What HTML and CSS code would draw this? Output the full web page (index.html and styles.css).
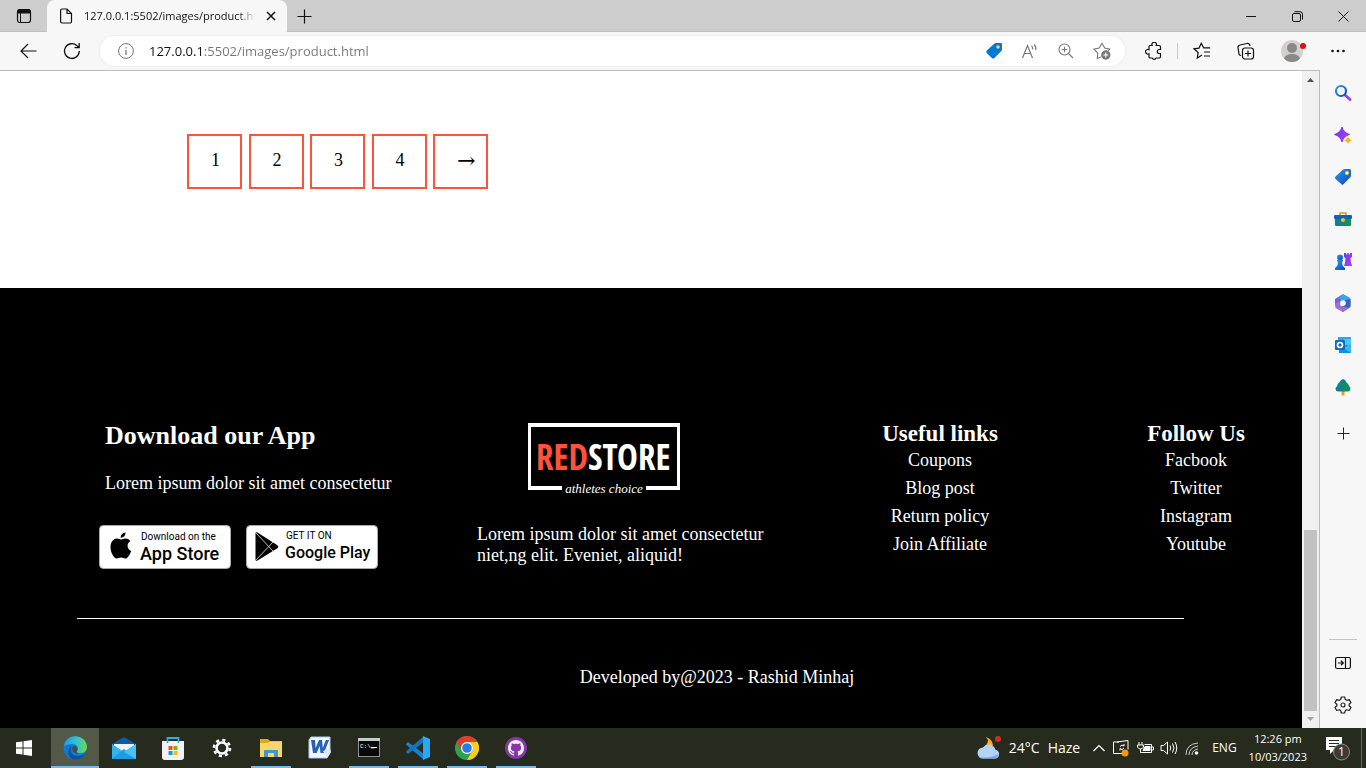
FILE: index.html
```html
<!DOCTYPE html>
<html lang="en">
<head>
<meta charset="utf-8">
<title>Product page</title>
<link rel="stylesheet" href="styles.css">
</head>
<body class="screen">

<header class="titlebar">
  <button class="tab-actions" aria-label="Tab actions"><svg width="16" height="16" viewBox="0 0 16 16" fill="none" stroke="#111"><rect x="1.500" y="1.500" width="13" height="13" rx="2.500" stroke-width="1.200"/><path d="M1.500 5V4a2.500 2.500 0 0 1 2.500-2.500h8A2.500 2.500 0 0 1 14.500 4v1z" fill="#111"/><path d="M4.500 5v9"/></svg></button>
  <div class="tab">
    <svg width="14" height="16" viewBox="0 0 14 16" fill="none" stroke="#111" stroke-width="1.200"><path d="M1.600 2.500a1.500 1.500 0 0 1 1.500-1.500H8l4.500 4.500v8a1.500 1.500 0 0 1-1.500 1.500H3.100a1.500 1.500 0 0 1-1.500-1.500zM8 1v4.500h4.500"/></svg>
    <span class="tab-title">127.0.0.1:5502/images/product.html</span>
    <button class="tab-close" aria-label="Close tab"><svg width="10" height="10" viewBox="0 0 10 10" stroke="#111" stroke-width="1.500"><path d="M1 1l8 8M9 1l-8 8"/></svg></button>
  </div>
  <button class="new-tab" aria-label="New tab"><svg width="15" height="15" viewBox="0 0 15 15" stroke="#111" stroke-width="1.200"><path d="M7.500 .5v14M.5 7.500h14"/></svg></button>
  <div class="window-buttons">
    <button aria-label="Minimize"><svg width="10" height="10" viewBox="0 0 10 10" stroke="#111"><path d="M0 5.500h10"/></svg></button>
    <button aria-label="Restore"><svg width="11" height="11" viewBox="0 0 11 11" fill="none" stroke="#111"><rect x=".5" y="2.500" width="8" height="8" rx="1.500"/><path d="M2.500 .7h5.500a2.500 2.500 0 0 1 2.500 2.500v5.300"/></svg></button>
    <button aria-label="Close"><svg width="11" height="11" viewBox="0 0 11 11" stroke="#111"><path d="M.5 .5l10 10M10.500 .5l-10 10"/></svg></button>
  </div>
</header>

<nav class="toolbar" aria-label="Browser">
  <button class="tool" aria-label="Back"><svg width="17" height="16" viewBox="0 0 17 16" fill="none" stroke="#111" stroke-width="1.200"><path d="M16.500 8H1M8 1L1 8l7 7"/></svg></button>
  <button class="tool reload" aria-label="Refresh"><svg width="18" height="18" viewBox="0 0 18 18" fill="none" stroke="#111" stroke-width="1.300"><path d="M16.300 9A7.400 7.400 0 1 1 14 3.700l2 1.800M16.200 1v4.600h-4.700"/></svg></button>
  <div class="address">
    <svg width="16" height="16" viewBox="0 0 16 16" fill="none" stroke="#777"><circle cx="8" cy="8" r="7.400"/><path d="M8 7v5M8 4.200v1.400" stroke-width="1.300"/></svg>
    <input class="url" type="text" aria-label="Address" value="127.0.0.1:5502/images/product.html">
    <button class="tool" aria-label="Shopping"><svg width="18" height="18" viewBox="0 0 18 18"><path d="M9.500 1.500Q10 1 11 1h5q1 0 1 1v5.500q0 .8-.6 1.400l-7 7q-1.300 1.300-2.600 0l-5-5q-1.200-1.200 0-2.400z" fill="#0078d7"/><circle cx="13" cy="5" r="1.800" fill="#ffd43b"/></svg></button>
    <button class="tool" aria-label="Read aloud"><svg width="18" height="16" viewBox="0 0 18 16" fill="none" stroke="#777" stroke-width="1.200"><path d="M1.500 15L6.500 2.500l5 12.500M3.300 10.500h6.500M10.500 3q1.500 1.300 1.200 3.500M13 1.500q2.500 2 1.700 5.500"/></svg></button>
    <button class="tool" aria-label="Zoom"><svg width="16" height="16" viewBox="0 0 16 16" fill="none" stroke="#777" stroke-width="1.100"><circle cx="6.500" cy="6.500" r="5.500"/><path d="M10.500 10.500l4.500 4.500M6.500 3.700v5.600M3.700 6.500h5.600"/></svg></button>
    <button class="tool" aria-label="Add to favorites"><svg width="18" height="18" viewBox="0 0 18 18" fill="none" stroke="#777" stroke-width="1.100"><path d="M8 15l-3.700 1.500.5-5.300L1 7.200l5.200-1.100L9 1.300l2.700 4.800 5 1.100-1.500 1.600"/><circle cx="12.800" cy="13" r="4.700" fill="#777" stroke="none"/><path d="M12.800 10.500v5M10.300 13h5" stroke="#fff"/></svg></button>
  </div>
  <button class="tool extensions" aria-label="Extensions"><svg width="18" height="18" viewBox="0 0 18 18" fill="none" stroke="#111" stroke-width="1.200"><path d="M4 4.500a1 1 0 0 1 1-1h2.200a2.300 2.300 0 1 1 4 0H14a1.500 1.500 0 0 1 1.500 1.500v2.500h-1.200a2 2 0 1 0 0 4h1.200v3a1.500 1.500 0 0 1-1.500 1.500h-2.800a2.200 2.200 0 0 1-4 0H5a1 1 0 0 1-1-1v-3.300a2.300 2.300 0 1 1 0-4z"/></svg></button>
  <span class="divider"></span>
  <button class="tool" aria-label="Favorites"><svg width="18" height="18" viewBox="0 0 18 18" fill="none" stroke="#111" stroke-width="1.200"><path d="M9 13l-4.700 3 .8-5.500L1 6.800l5-.7L8.300 1.300l2.400 4.500h6.500M11 10h6M11 14h6"/></svg></button>
  <button class="tool collections" aria-label="Collections"><svg width="18" height="18" viewBox="0 0 18 18" fill="none" stroke="#111" stroke-width="1.200"><path d="M4 13.500A2.500 2.500 0 0 1 1.800 10.600L1 5.500A2.300 2.300 0 0 1 3 3l7-1.500A2.500 2.500 0 0 1 13 4"/><rect x="5.500" y="6" width="11" height="11" rx="2.500"/><path d="M11 8.500v6M8 11.500h6"/></svg></button>
  <button class="tool profile" aria-label="Profile"><svg width="28" height="24" viewBox="0 0 28 24"><defs><clipPath id="face"><circle cx="12" cy="12" r="11"/></clipPath></defs><circle cx="12" cy="12" r="11" fill="#d2d0ce"/><g clip-path="url(#face)" fill="#8a8886"><circle cx="12" cy="9" r="5"/><ellipse cx="12" cy="20" rx="8" ry="5"/></g><circle cx="23" cy="7" r="3" fill="#e00b0b"/></svg></button>
  <button class="tool menu" aria-label="Settings and more"><svg width="14" height="4" viewBox="0 0 14 4" fill="#111"><circle cx="1.500" cy="2" r="1.300"/><circle cx="7" cy="2" r="1.300"/><circle cx="12.500" cy="2" r="1.300"/></svg></button>
</nav>

<div class="workspace">
  <main class="page">
    <nav class="pagination" aria-label="Pages">
      <a href="#">1</a>
      <a href="#">2</a>
      <a href="#">3</a>
      <a href="#">4</a>
      <a href="#" class="next">&#8594;</a>
    </nav>
    <footer class="footer">
      <div class="columns">
        <section class="download">
          <h2>Download our App</h2>
          <p>Lorem ipsum dolor sit amet consectetur</p>
          <div class="badges">
            <a href="#" aria-label="App Store"><svg width="132" height="44" viewBox="0 0 132 44"><rect x=".5" y=".5" width="131" height="43" rx="4" fill="#fff" stroke="#aaa"/><path d="M26.500 7.500c.3 2.800-2 5.300-4.800 5.200-.2-2.600 2-5 4.800-5.200zM22 14.500c1.200 0 2.400-1.200 4.600-1.100 2 .1 3.800 1 4.800 2.500-4.200 2.600-3.500 8.300.8 10-1.200 3.400-3.400 7.600-6 7.600-1.500 0-2.200-1-4.200-1s-2.800 1-4.200 1c-3 0-6.300-6.200-6.300-11.200 0-5.500 3.300-8.800 6.500-8.800 1.600 0 3 1 4 1z"/><text x="42" y="15" class="badge-small">Download on the</text><text x="41" y="35" class="badge-large">App Store</text></svg></a>
            <a href="#" aria-label="Google Play"><svg width="132" height="44" viewBox="0 0 132 44"><rect x=".5" y=".5" width="131" height="43" rx="4" fill="#fff" stroke="#aaa"/><path d="M9.500 8.500q0-2 2-1L31 20q2.500 1.800 0 3.500L11.500 35.500q-2 1-2-1z"/><path d="M10 8l17 18M10 35l17-18" stroke="#bbb"/><text x="40" y="14" class="badge-small">GET IT ON</text><text x="39" y="33" class="badge-large play">Google Play</text></svg></a>
          </div>
        </section>
        <section class="about">
          <svg class="logo" width="152" height="76" viewBox="0 0 152 76" role="img" aria-label="Redstore athletes choice"><path d="M34 66H1.500V3h149v63H118" fill="none" stroke="#fff" stroke-width="3"/><path d="M0 1h152v4H0zM0 64h34v4H0zM118 64h34v4h-34z" fill="#fff"/><text x="8" y="48" class="logo-name"><tspan class="logo-red">RED</tspan>STORE</text><text x="76" y="71" class="logo-tagline" text-anchor="middle">athletes choice</text></svg>
          <p>Lorem ipsum dolor sit amet consectetur<br>niet,ng elit. Eveniet, aliquid!</p>
        </section>
        <section class="links">
          <h3>Useful links</h3>
          <ul>
            <li><a href="#">Coupons</a></li>
            <li><a href="#">Blog post</a></li>
            <li><a href="#">Return policy</a></li>
            <li><a href="#">Join Affiliate</a></li>
          </ul>
        </section>
        <section class="links">
          <h3>Follow Us</h3>
          <ul>
            <li><a href="#">Facbook</a></li>
            <li><a href="#">Twitter</a></li>
            <li><a href="#">Instagram</a></li>
            <li><a href="#">Youtube</a></li>
          </ul>
        </section>
      </div>
      <hr class="rule">
      <p class="credit">Developed by@2023 - Rashid Minhaj</p>
    </footer>
  </main>

  <div class="scrollbar" aria-hidden="true">
    <svg width="17" height="17" viewBox="0 0 17 17"><path d="M5 11l3.500-4 3.500 4z" fill="#505050"/></svg>
    <div class="track"><div class="thumb"></div></div>
    <svg width="17" height="17" viewBox="0 0 17 17"><path d="M5 6l3.500 4L12 6z" fill="#a3a3a3"/></svg>
  </div>

  <aside class="sidebar">
    <svg width="0" height="0" class="defs"><defs>
      <linearGradient id="blue" x2="1" y2="1"><stop stop-color="#2f9be8"/><stop offset="1" stop-color="#0a47c2"/></linearGradient>
      <linearGradient id="violet" x2="1" y2="1"><stop stop-color="#6a35e8"/><stop offset="1" stop-color="#b043f5"/></linearGradient>
      <linearGradient id="teal" x2="1"><stop stop-color="#1479a3"/><stop offset="1" stop-color="#10964a"/></linearGradient>
    </defs></svg>
    <button aria-label="Search"><svg width="18" height="18" viewBox="0 0 18 18" fill="none"><path d="M11 11l5 4.500" stroke="#9140e8" stroke-width="2.800" stroke-linecap="round"/><circle cx="7" cy="7" r="5" stroke="url(#blue)" stroke-width="2.200"/></svg></button>
    <button aria-label="Discover"><svg width="18" height="18" viewBox="0 0 18 18"><path d="M8 1q1.500 5.500 7.500 7.500Q9.500 10 8 16 6.500 10 .5 8.500 6.500 6.500 8 1z" fill="url(#violet)" stroke="#8038ed" stroke-linejoin="round"/><path d="M14 10.500q.8 3 4 3.800-3.200.7-4 3.700-.8-3-4-3.700 3.200-.8 4-3.800z" fill="#f7b50c"/></svg></button>
    <button aria-label="Shopping"><svg width="18" height="18" viewBox="0 0 18 18"><path d="M8.500 2Q9.500 1 11 1h4.500Q17 1 17 2.500v5q0 1-.8 1.800l-6.700 7q-1 1-2 0L1.500 11q-1.300-1.200 0-2.500z" fill="url(#blue)"/><circle cx="13" cy="5" r="1.700" fill="#fff" stroke="#f5bd19"/></svg></button>
    <button aria-label="Tools"><svg width="18" height="16" viewBox="0 0 18 16"><path d="M6 4V2h6v2" fill="none" stroke="#d69b12" stroke-width="1.500"/><rect x="1" y="6" width="16" height="9" rx="1" fill="url(#teal)"/><rect x="0" y="4" width="18" height="4" rx="1" fill="#1261b8"/><circle cx="9" cy="9" r="2" fill="#f6c12a"/></svg></button>
    <button aria-label="Games"><svg width="18" height="18" viewBox="0 0 18 18"><path d="M10 1h2v1.500h1.200V1h1.600v1.500H16V1h2v4l-1.500 1 .5 5 1 2v1h-8l1-3 .5-5L10 5z" fill="url(#violet)"/><circle cx="6" cy="5.500" r="3" fill="url(#blue)"/><path d="M3 8h6v1.500H8l.5 4L11 16v2H1v-2l2.500-2.500.5-4H3z" fill="url(#blue)"/></svg></button>
    <button aria-label="Microsoft 365"><svg width="18" height="18" viewBox="0 0 18 18"><path d="M9 0l7 4v5l-5-3-4 2-1 6-5-3V5z" fill="#7168d3"/><path d="M7 1h3l6.500 3.500V12L9 7.500 5 5z" fill="#38a7e7"/><path d="M16.500 5v8L9 18l-6-4 8-3V6z" fill="#3f5ec3"/><path d="M1 10l5-3v5l5 1 4 1-6 4-7.500-4z" fill="#a46bd7"/><circle cx="9" cy="9" r="2.800" fill="#f7f7f7"/></svg></button>
    <button aria-label="Outlook"><svg width="18" height="18" viewBox="0 0 18 18"><path d="M4 1h13v8H4z" fill="#28a8ea"/><path d="M5 8h12v9H5z" fill="#1490df"/><path d="M10 3h7v6h-7z" fill="#50c4f5"/><path d="M17 8v9l-8-5z" fill="#35b8f1"/><rect x="1" y="4" width="10" height="10" rx="1" fill="#0f6cbd"/><circle cx="6" cy="9" r="2.500" fill="none" stroke="#fff" stroke-width="1.600"/></svg></button>
    <button aria-label="Drop"><svg width="18" height="18" viewBox="0 0 18 18"><path d="M7.500 12h3v5.500h-3z" fill="#f0a01e"/><path d="M9 1q2.500.3 3.500 3.500Q15 6 15 8q2 1.500 1.300 3.700Q15.500 14 13 13.500H4Q1.500 13 1.500 11 1.500 9 3.300 8 3 5.500 5.300 4.500 6.500 1.500 9 1z" fill="url(#teal)"/></svg></button>
    <button class="add" aria-label="Customize"><svg width="13" height="13" viewBox="0 0 13 13" stroke="#222"><path d="M6.500 .5v12M.5 6.500h12"/></svg></button>
    <div class="sidebar-bottom">
      <button aria-label="Hide sidebar"><svg width="16" height="14" viewBox="0 0 16 14" fill="none" stroke="#111" stroke-width="1.200"><rect x=".6" y="1.500" width="14.800" height="11" rx="1.500"/><path d="M10.500 1.500v11M3 7h5M6 4.800L8.300 7 6 9.200"/></svg></button>
      <button aria-label="Settings"><svg width="18" height="18" viewBox="0 0 18 18" fill="none" stroke="#222" stroke-width="1.200" stroke-linejoin="round"><path d="M7.300 1h3.400l.6 2.500 1.500.8 2.500-.7 1.700 3-1.900 1.700v1.500L17 11.500l-1.700 3-2.500-.8-1.500.9-.6 2.400H7.300l-.6-2.400-1.500-.9-2.500.8-1.700-3 1.900-1.700V8.300L1 6.600l1.700-3 2.500.7 1.500-.8z"/><circle cx="9" cy="9" r="2"/></svg></button>
    </div>
  </aside>
</div>

<div class="taskbar">
  <button class="start" aria-label="Start"><svg width="16" height="16" viewBox="0 0 16 16" fill="#fff"><path d="M0 2.300l6.500-.9v6.100H0zM7.500 1.200L16 0v7.500H7.500zM0 8.500h6.500v6.100L0 13.700zM7.500 8.500H16V16l-8.500-1.200z"/></svg></button>
  <button class="app running active" aria-label="Edge"><svg width="24" height="24" viewBox="0 0 24 24"><defs><linearGradient id="edgeTop"><stop stop-color="#1b9de2"/><stop offset=".55" stop-color="#35c1cf"/><stop offset="1" stop-color="#67dc4b"/></linearGradient></defs><circle cx="12" cy="12" r="11.500" fill="#1478ce"/><path d="M.7 10.500C2 4 6.500.3 12.200.3 18.500.3 24 5 24 11c0 4-3.500 6.300-7 6.300-3.200 0-4-1.300-3.100-2.300 2-2.500.8-7-4.500-7-3.500 0-7 1-8.700 2.500z" fill="url(#edgeTop)"/><path d="M9 9.500C6 13 7.500 20.500 15 20c3 0 5-1 7-2.200-3 5-8 6.500-12 5.500C4 21 4 12.500 9 9.500z" fill="#0c4fa4"/><path d="M10 10.500c3-1.500 5.800 2 3.800 4.500-.8 1 .2 2.300 3 2.300-4 1.400-9.800-2-6.800-6.800z" fill="#474d41"/></svg></button>
  <button class="app" aria-label="Mail"><svg width="24" height="24" viewBox="0 0 24 24"><path d="M0 8L12 1l12 7v8H0z" fill="#0a5cab"/><path d="M2 8h20v8H2z" fill="#eef3f8"/><path d="M0 8l12 8 12-8v15H0z" fill="#33b2ed"/><path d="M0 23l12-10 12 10z" fill="#229ae0"/><path d="M12 16l12-8v15z" fill="#45c2f6"/></svg></button>
  <button class="app" aria-label="Store"><svg width="24" height="24" viewBox="0 0 24 24"><path d="M1 5h22v16q0 3-3 3H4q-3 0-3-3z" fill="#f2f2f2"/><path d="M6.500 7V2h11v5" fill="none" stroke="#2faee0" stroke-width="1.800"/><path d="M7.500 10h4v4h-4z" fill="#f05022"/><path d="M12.500 10h4v4h-4z" fill="#7fb900"/><path d="M7.500 15h4v4h-4z" fill="#00a3ee"/><path d="M12.500 15h4v4h-4z" fill="#feb800"/></svg></button>
  <button class="app" aria-label="Settings"><svg width="20" height="20" viewBox="0 0 20 20" fill="none" stroke="#fff"><circle cx="10" cy="10" r="5.500" stroke-width="2.600"/><circle cx="10" cy="10" r="8" stroke-width="2.600" stroke-dasharray="3.140 3.140"/></svg></button>
  <button class="app running" aria-label="File Explorer"><svg width="22" height="20" viewBox="0 0 22 20"><path d="M0 1h8l2 2h12v5H0z" fill="#e8a419"/><path d="M0 5h8l2-1.500h12V19H0z" fill="#ffd566"/><path d="M4 19v-6q0-1 1-1h12q1 0 1 1v6h-4v-4H8v4z" fill="#3b97dc"/></svg></button>
  <button class="app" aria-label="Word"><svg width="24" height="24" viewBox="0 0 24 24"><path d="M3 1h19v16l-3 5H1V4z" fill="#f4f8fd" stroke="#a8c8ec"/><path d="M3 4h4l.6 8L11 4h3l.8 8 3-8H21l-5 13h-3.500l-.8-7-3 7H5z" fill="#2761ba"/><path d="M15 15l7-3 1 4-4 6z" fill="#dce7f4"/></svg></button>
  <button class="app running" aria-label="Command Prompt"><svg width="22" height="20" viewBox="0 0 22 20"><rect x=".5" y=".5" width="21" height="18" fill="#090909" stroke="#8d929a"/><path d="M0 0h22v3H0z" fill="#c4cbd5"/><text x="2" y="10" class="prompt">C:\_</text><path d="M13 9.500h6" stroke="#fff"/></svg></button>
  <button class="app running" aria-label="Visual Studio Code"><svg width="24" height="24" viewBox="0 0 24 24"><path d="M0 8l2-2 16 12v6L.5 9z" fill="#1584cf"/><path d="M0 16l2 2L18 6V0L.5 15z" fill="#1575bb"/><path d="M17 0l7 3v18l-7 3z" fill="#2ca7f3"/></svg></button>
  <button class="app running" aria-label="Chrome"><svg width="24" height="24" viewBox="0 0 24 24"><circle cx="12" cy="12" r="12" fill="#2ba24c"/><path d="M1.600 6A12 12 0 0 1 22.400 6H12a6 6 0 0 0-5.200 9z" fill="#e33b2e"/><path d="M22.400 6A12 12 0 0 1 12 24l5.200-9A6 6 0 0 0 12 6z" fill="#fccb1c"/><circle cx="12" cy="12" r="6" fill="#fff"/><circle cx="12" cy="12" r="4.800" fill="#2979e8"/></svg></button>
  <button class="app running" aria-label="GitHub Desktop"><svg width="24" height="24" viewBox="0 0 24 24"><circle cx="12" cy="12" r="11" fill="#8537a7"/><path transform="translate(4 4)" fill="#f6edf9" d="M8 0C3.580 0 0 3.580 0 8c0 3.540 2.290 6.530 5.470 7.590.4.070.55-.17.55-.38 0-.19-.01-.82-.01-1.490-2.010.37-2.530-.49-2.690-.94-.09-.23-.48-.94-.82-1.130-.28-.15-.68-.52-.01-.53.63-.01 1.080.58 1.230.82.72 1.210 1.870.87 2.330.66.070-.52.28-.87.51-1.070-1.780-.2-3.640-.89-3.640-3.950 0-.87.31-1.590.82-2.150-.08-.2-.36-1.020.08-2.120 0 0 .67-.21 2.200.82.64-.18 1.320-.27 2-.27s1.360.09 2 .27c1.530-1.040 2.200-.82 2.200-.82.44 1.100.16 1.920.08 2.120.51.56.82 1.270.82 2.150 0 3.070-1.870 3.750-3.650 3.950.29.25.54.73.54 1.480 0 1.070-.01 1.930-.01 2.200 0 .21.15.46.55.38A8.010 8.010 0 0 0 16 8c0-4.420-3.580-8-8-8z"/></svg></button>

  <div class="tray">
    <button class="weather"><svg width="26" height="26" viewBox="0 0 26 26"><path d="M11 2q5 5-3 11 8 3 10-3Q17 4 11 2z" fill="#f9a833"/><circle cx="23" cy="4" r="3" fill="#d22b20"/><path d="M8 23.500a5.500 5.500 0 0 1 0-11 7 7 0 0 1 12.500 2.300 4.500 4.500 0 0 1 .5 8.700z" fill="#b5d2f5"/><path d="M4 22q9 2 20-3-1 4-3.500 4.500H8Q5.500 23.500 4 22z" fill="#7ea9e6"/></svg><span>24°C</span><span>Haze</span></button>
    <button aria-label="Show hidden icons"><svg width="14" height="8" viewBox="0 0 14 8" fill="none" stroke="#fff" stroke-width="1.200"><path d="M1.500 7L7 1.500 12.500 7"/></svg></button>
    <button aria-label="Update"><svg width="18" height="18" viewBox="0 0 18 18" fill="none" stroke="#fff"><path d="M7 3H1.500v11.500H10M5 3l11-1.500v9M8 7.500q2-2.500 4-.5V5M12 9q-2 3-4 .5v2"/><circle cx="13" cy="14" r="3.500" fill="#ff9800" stroke="none"/></svg></button>
    <button aria-label="Battery"><svg width="18" height="16" viewBox="0 0 18 16" fill="none" stroke="#fff"><path d="M3 2v3M6 2v3M1.500 5h6v2q-1 2-3 2T1.500 7zM4.500 9v3.500h11v-8H8.500M16 7h1.500v3H16"/><path d="M9 6.500h5v4H7z" fill="#fff"/></svg></button>
    <button aria-label="Volume"><svg width="18" height="16" viewBox="0 0 18 16" fill="none" stroke="#fff"><path d="M1 5.500h2.500l4-3.500v12l-4-3.500H1zM10 5.500q1.500 2.500 0 5M12.500 3.500q3 4.500 0 9M15 2q3.500 6 0 12"/></svg></button>
    <button aria-label="Network"><svg width="16" height="16" viewBox="0 0 16 16" fill="none" stroke="#ccc"><path d="M2 15Q2 4 14 3M5 15Q5 7.500 14 6M8 15q0-5 6-6"/><circle cx="12.500" cy="13" r="1.800" fill="#fff" stroke="none"/></svg></button>
    <button class="language">ENG</button>
    <button class="clock"><span>12:26 pm</span><span>10/03/2023</span></button>
    <button class="notifications" aria-label="Notifications, 1 new"><svg width="26" height="26" viewBox="0 0 26 26"><path d="M1 2h16v13H9l-4 4v-4H1z" fill="#fff"/><path d="M4 5.500h10M4 8.500h10M4 11.500h7" stroke="#262b1e"/><circle cx="16.500" cy="17" r="8" fill="#3a3d37" stroke="#8b8d88"/><text x="16.500" y="21" text-anchor="middle" class="count">1</text></svg></button>
    <span class="show-desktop"></span>
  </div>
</div>
</body>
</html>
```
FILE: styles.css
```css
* { box-sizing: border-box; }
.screen { margin: 0; height: 100vh; overflow: hidden; display: flex; flex-direction: column; font-family: "Open Sans", "Noto Sans", sans-serif; color: #111; background: #f7f7f7; }
button { border: 0; padding: 0; background: none; color: inherit; font: inherit; display: flex; align-items: center; justify-content: center; }
svg { display: block; flex: none; }
h2, h3, p, ul { margin: 0; padding: 0; }

/* Tab strip */
.titlebar { height: 32px; flex: none; display: flex; background: #cdcdcd; box-shadow: inset 0 -1px #bfbfbf; }
.tab-actions { width: 47px; }
.tab { width: 240px; display: flex; align-items: center; padding: 0 11px 0 12px; gap: 11px; background: #f7f7f7; border-radius: 8px 8px 0 0; }
.tab-title { flex: 1; overflow: hidden; white-space: nowrap; font-size: 11px; line-height: 16px; -webkit-mask-image: linear-gradient(90deg, #000 90%, transparent); mask-image: linear-gradient(90deg, #000 90%, transparent); }
.new-tab { width: 34px; }
.window-buttons { margin-left: auto; display: flex; }
.window-buttons button { width: 46px; }

/* Navigation bar */
.toolbar { height: 38px; flex: none; display: flex; align-items: center; padding: 0 10px; }
.tool { width: 36px; height: 30px; flex: none; }
.reload { margin: 0 10px 0 8px; }
.address { flex: 1; height: 30px; display: flex; align-items: center; padding: 0 5px 0 18px; background: #fff; border-radius: 15px; box-shadow: 0 0 3px #e4e4e4; }
.url { flex: 1; min-width: 0; margin-left: 15px; padding: 0; border: 0; outline: 0; font: 13px/20px "Open Sans", "Noto Sans", sans-serif; color: transparent; background: linear-gradient(90deg, #111 54px, #767676 54px); -webkit-background-clip: text; background-clip: text; }
.extensions { margin-left: 11px; }
.divider { width: 1px; height: 16px; margin: 0 6px 0 5px; background: #c8c8c8; }
.collections { margin: 0 10px 0 8px; }
.profile { padding-left: 4px; }
.menu { margin-left: 10px; }

/* Document, scrollbar and sidebar */
.workspace { flex: 1; min-height: 0; display: flex; }
.page { flex: 1; min-width: 0; display: flex; flex-direction: column; border-top: 1px solid #bbb; background: #fff; font: 18px/21px "Liberation Serif", serif; }
.pagination { padding: 63px 187px 99px; color: #000; white-space: nowrap; }
.pagination a { display: inline-block; vertical-align: top; width: 55px; height: 55px; margin-right: 2px; padding: 14px 0 0 22px; border: 2px solid #ff523b; color: inherit; text-decoration: none; }
.pagination .next { font-family: "DejaVu Serif", serif; font-size: 22px; }
.footer { flex: 1; padding-top: 134px; background: #000; color: #fff; }
.footer a { color: inherit; text-decoration: none; }
.columns { display: grid; grid-template-columns: 378fr 313fr 300fr 212fr; padding-left: 99px; }
.download h2 { padding-left: 6px; font-size: 26px; line-height: 28px; }
.download p { padding: 23px 0 31px 6px; }
.badges { display: flex; gap: 15px; }
.badge-small { font: 10px Roboto, sans-serif; }
.badge-large { font: 500 18px Roboto, sans-serif; }
.play { font-size: 16px; }
.logo { margin: 0 0 26px 51px; }
.logo-name { font: 700 35px "Open Sans Condensed", "Liberation Sans Narrow", Roboto, sans-serif; fill: #fff; }
.logo-red { fill: #ff523b; }
.logo-tagline { font: italic 13px "Liberation Serif", serif; fill: #fff; }
.links { text-align: center; }
.links h3 { font-size: 23px; line-height: 24px; }
.links ul { list-style: none; display: grid; gap: 7px; padding-top: 4px; }
.rule { height: 1px; margin: 49px 118px 0 77px; border: 0; background: #fff; }
.credit { padding: 48px 0 0 132px; text-align: center; }

.scrollbar { width: 17px; flex: none; display: flex; flex-direction: column; border-top: 1px solid #bbb; background: #f0f0f0; }
.track { flex: 1; display: flex; flex-direction: column; justify-content: flex-end; padding: 0 2px; }
.thumb { height: 29%; background: #c1c1c1; }
.sidebar { width: 47px; flex: none; display: flex; flex-direction: column; padding: 2px 0; border-left: 1px solid #bbb; }
.sidebar button { width: 46px; height: 42px; }
.defs { height: 0; }
.add { margin-top: 4px; }
.sidebar-bottom { margin-top: auto; padding-top: 2px; }
.sidebar-bottom::before { content: ""; display: block; height: 1px; margin: 0 9px 2px; background: #c2c2c2; }

/* Taskbar */
.taskbar { height: 40px; flex: none; display: flex; gap: 1px; background: #262b1e; color: #fff; }
.start { width: 50px; padding-right: 2px; }
.app { width: 48px; position: relative; }
.running::after { content: ""; position: absolute; left: 4px; right: 4px; bottom: 0; height: 2px; background: #76b9ed; }
.active { background: #535849; }
.active::after { left: 0; right: 0; }
.prompt { font: 6px "Liberation Mono", monospace; fill: #fff; }
.tray { margin-left: auto; display: flex; align-items: center; gap: 6px; font-size: 12px; line-height: 18px; }
.weather { gap: 8px; margin-right: 6px; font-size: 14px; }
.language { margin-left: 6px; }
.clock { flex-direction: column; margin: 0 12px 0 6px; font-size: 11px; }
.notifications { margin-right: 4px; }
.count { font: 12px "Open Sans", sans-serif; fill: #fff; }
.show-desktop { width: 5px; height: 40px; border-left: 1px solid #65695f; }
```
